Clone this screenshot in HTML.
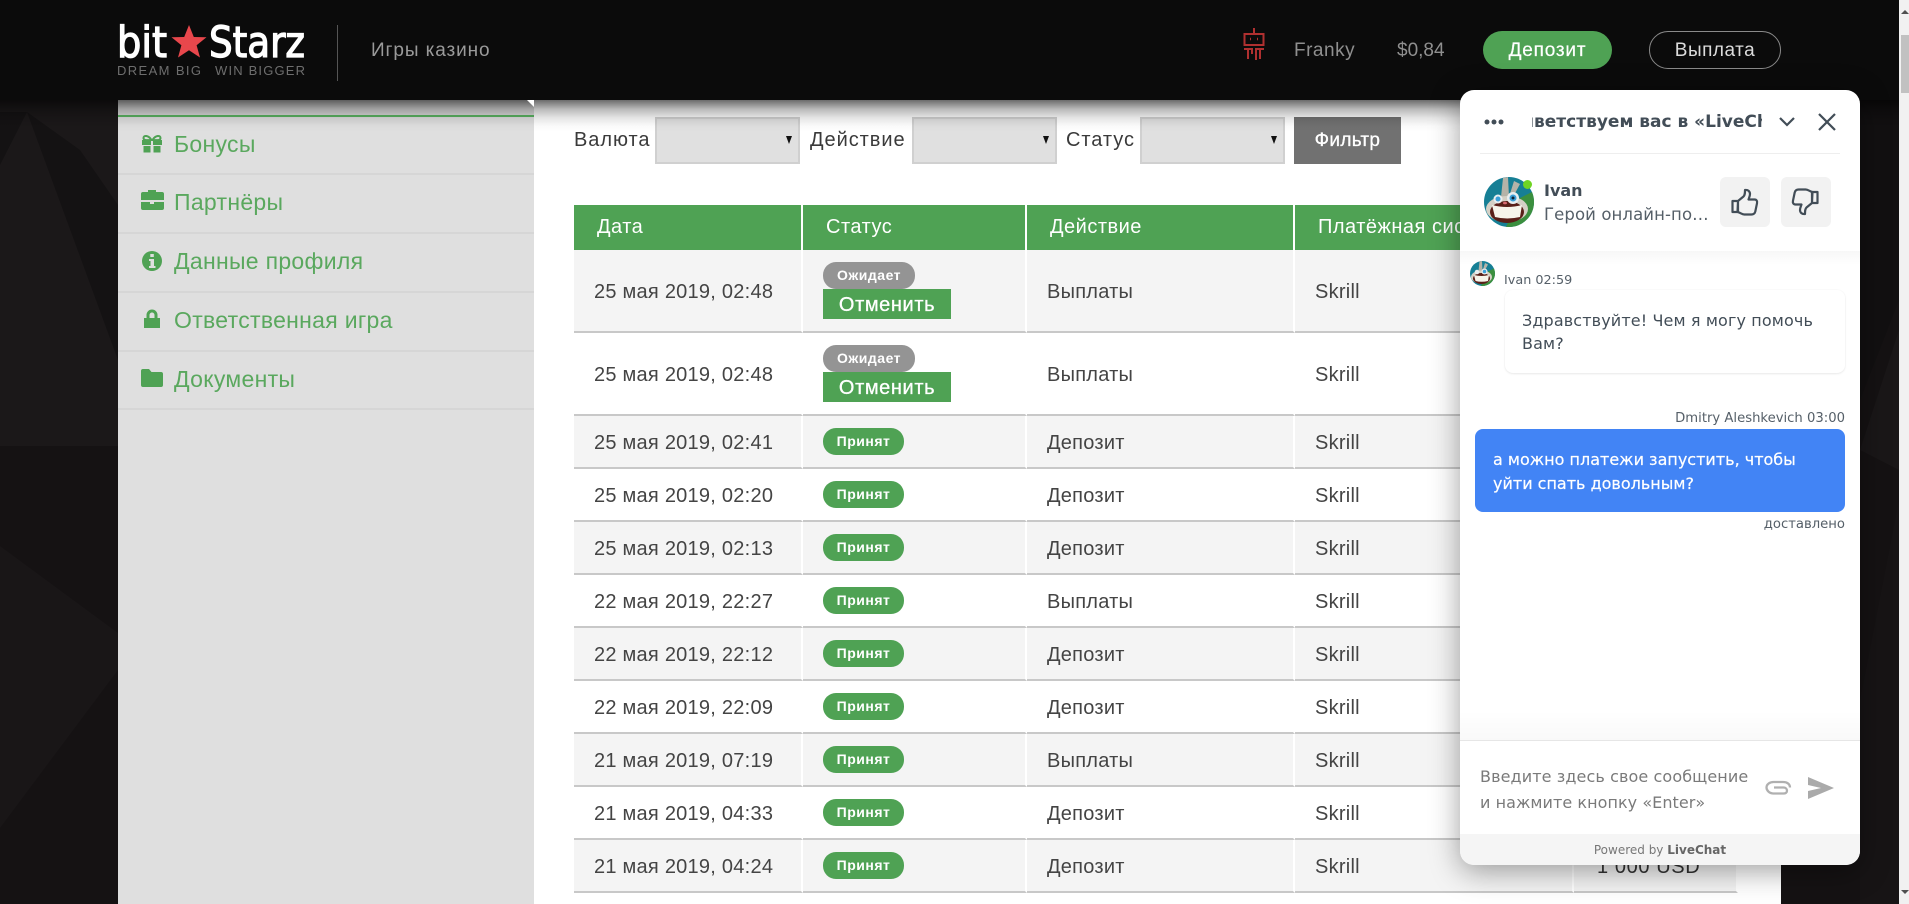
<!DOCTYPE html>
<html lang="ru"><head><meta charset="utf-8"><title>BitStarz</title>
<style>
html,body{margin:0;padding:0;width:1909px;height:904px;overflow:hidden;background:#151213}
*{box-sizing:border-box}
body{font-family:"Liberation Sans",sans-serif;position:relative}
.a{position:absolute;white-space:nowrap}
#hdr{position:absolute;left:0;top:0;width:1899px;height:100px;background:#0b0b0b;z-index:3}
#side{position:absolute;left:118px;top:100px;width:416px;height:804px;background:#dfdfdf}
#main{position:absolute;left:534px;top:100px;width:1247px;height:804px;background:#fff}
#sh{position:absolute;left:0;top:100px;width:1899px;height:32px;z-index:2;background:linear-gradient(rgba(0,0,0,.58),rgba(0,0,0,.28) 9px,rgba(0,0,0,.1) 18px,rgba(0,0,0,.02) 26px,rgba(0,0,0,0))}
.ln{position:absolute;left:118px;width:416px;height:2px;background:#d6d6d6}
.m{position:absolute;left:174px;font-size:23px;line-height:30px;color:#5aa85e;white-space:nowrap;letter-spacing:.3px}
.lb{position:absolute;top:126px;font-size:20px;line-height:28px;color:#3a3a3a;white-space:nowrap;letter-spacing:.95px}
.sel{position:absolute;top:117px;height:47px;background:#e0e0e0;border:2px solid #d0d0d0}
.sel:after{content:"";position:absolute;right:6px;top:17px;border-left:3.5px solid transparent;border-right:3.5px solid transparent;border-top:8px solid #111}
#tb{position:absolute;left:574px;top:205px;border-collapse:separate;border-spacing:0;table-layout:fixed;width:1164px}
#tb th{height:45px;background:#4fa254;color:#fff;font-weight:normal;font-size:20px;letter-spacing:.5px;text-align:left;padding:0 0 0 23px;border-right:2px solid #fff;white-space:nowrap;overflow:hidden}
#tb td{height:53px;font-size:20px;letter-spacing:.25px;color:#444;padding:3px 0 0 20px;border-bottom:2px solid #c8c8c8;border-right:2px solid #fff;white-space:nowrap;overflow:hidden}
#tb tr:nth-child(odd) td{background:#f4f4f4}
#tb tr.t td{height:83px}
#tb td.s{padding:0 0 0 20px}
.p{display:block;width:81px;height:27px;border-radius:13px;background:#4fa254;color:#fff;font-weight:bold;font-size:14px;line-height:27px;text-align:center;letter-spacing:.5px}
.p.w{width:92px;background:#949494}
.c{display:block;width:128px;height:30px;background:#4fa254;color:#fff;font-size:20px;font-weight:normal;line-height:33px;text-align:center;-webkit-text-stroke:.3px #fff;letter-spacing:.6px}
#chat{position:absolute;left:1460px;top:90px;width:400px;height:775px;background:#fff;border-radius:14px;box-shadow:0 6px 30px rgba(0,0,0,.38);z-index:5;overflow:hidden;font-family:"DejaVu Sans","Liberation Sans",sans-serif;color:#424d57}
#chat .a{line-height:24px}
</style></head><body>

<svg class="a" style="left:0;top:0" width="1909" height="904" viewBox="0 0 1909 904">
<rect width="1909" height="904" fill="#151213"/>
<polygon points="0,100 118,100 118,446 0,446" fill="#1b1819"/>
<polygon points="27,112 80,150 118,205 118,360" fill="#141213"/>
<polygon points="0,112 27,112 0,165" fill="#141213"/>
<polygon points="0,546 118,633 118,670 0,828" fill="#191617"/>
<polygon points="1860,450 1899,330 1899,470" fill="#1a1718"/>
<polygon points="1860,100 1899,100 1899,300 1860,400" fill="#121011"/>
<polygon points="1860,700 1899,500 1899,904 1860,904" fill="#171415"/>
</svg>

<div id="hdr">
<svg class="a" style="left:110px;top:18px" width="205" height="64" viewBox="110 18 205 64">
<text x="117" y="57" font-family="DejaVu Sans" font-size="43" fill="#fff" stroke="#fff" stroke-width="1.300" textLength="50" lengthAdjust="spacingAndGlyphs">bit</text>
<polygon fill="#e8474c" points="189,25 193.8,37 206.500,37.300 196.600,45.200 200,57.500 189,50.300 178,57.500 181.400,45.200 171.500,37.300 184.200,37"/>
<text x="209" y="57" font-family="DejaVu Sans" font-size="43" fill="#fff" stroke="#fff" stroke-width="1.300" textLength="96" lengthAdjust="spacingAndGlyphs">Starz</text>
<text x="117" y="75" font-family="Liberation Sans" font-size="13" fill="#6e6e6e" textLength="84" lengthAdjust="spacing">DREAM BIG</text>
<text x="215" y="75" font-family="Liberation Sans" font-size="13" fill="#6e6e6e" textLength="90" lengthAdjust="spacing">WIN BIGGER</text>
</svg>
<div class="a" style="left:337px;top:25px;width:1px;height:56px;background:#555"></div>
<div class="a" style="left:371px;top:37px;font-size:19px;line-height:28px;color:#9a9a9a;letter-spacing:.9px">Игры казино</div>
<svg class="a" style="left:1241px;top:26px" width="26" height="36" viewBox="0 0 26 36" fill="none" stroke="#b03030" stroke-width="2">
<path d="M13 2v5"/><rect x="3.5" y="8" width="19" height="11"/><path d="M9 13h1M16 13h1" stroke-width="2.5"/>
<path d="M3 23h8v5M23 23h-8v11M7 23v10"/><path d="M19 23v10"/>
</svg>
<div class="a" style="left:1294px;top:37px;font-size:19px;line-height:28px;color:#8f8f8f;letter-spacing:.5px">Franky</div>
<div class="a" style="left:1397px;top:37px;font-size:19px;line-height:28px;color:#8f8f8f">$0,84</div>
<div class="a" style="left:1483px;top:31px;width:129px;height:38px;border-radius:19px;background:#4fa254;color:#fff;font-size:19px;line-height:40px;text-align:center;letter-spacing:.8px;-webkit-text-stroke:.2px #fff">Депозит</div>
<div class="a" style="left:1649px;top:31px;width:132px;height:38px;border-radius:19px;border:1px solid #8a8a8a;color:#dcdcdc;font-size:19px;line-height:38px;text-align:center;letter-spacing:.5px">Выплата</div>
</div>
<div id="sh"></div>

<div id="side"></div>
<div class="a" style="left:527px;top:100px;width:0;height:0;border-left:7px solid transparent;border-top:7px solid #fff;z-index:3"></div>
<div class="a" style="left:118px;top:115px;width:416px;height:2px;background:#4f9d55;z-index:3"></div>
<div class="ln" style="top:173px"></div><div class="ln" style="top:232px"></div><div class="ln" style="top:291px"></div><div class="ln" style="top:350px"></div><div class="ln" style="top:408px"></div>

<svg class="a" style="left:140px;top:130px" width="26" height="262" viewBox="140 130 26 262" fill="#4fa254">
<path d="M142 140h20v5h-20zM143.500 146h7v6.500h-7zM153.500 146h7v6.500h-7z"/><path d="M151 140h2v12.500h-2z" fill="#dfdfdf"/>
<path d="M151.500 140c-3-5-8-5-8-2s4 2 8 2zM152.500 140c3-5 8-5 8-2s-4 2-8 2z" fill="none" stroke="#4fa254" stroke-width="2"/>
<path d="M148 193v-3h8v3M141 194a2 2 0 0 1 2-2h19a2 2 0 0 1 2 2v6h-23zM141 202h9v2h4v-2h10v6a2 2 0 0 1-2 2h-19a2 2 0 0 1-2-2z"/>
<path fill-rule="evenodd" d="M152 251a10 10 0 1 1 0 20 10 10 0 0 1 0-20zM150.300 254h3.500v3h-3.500zM149 259h5v7h1.500v2h-6.500v-2h1.500v-5h-1.500z"/>
<path fill-rule="evenodd" d="M146.500 318v-3a5.500 5.500 0 0 1 11 0v3h2.500v10h-16v-10zM149.500 318h5v-3a2.500 2.500 0 0 0-5 0z"/>
<path d="M141 371a2 2 0 0 1 2-2h6l2.500 3h9.500a2 2 0 0 1 2 2v11a2 2 0 0 1-2 2h-18a2 2 0 0 1-2-2z"/>
</svg>
<div class="m" style="top:129px">Бонусы</div>
<div class="m" style="top:187px">Партнёры</div>
<div class="m" style="top:246px">Данные профиля</div>
<div class="m" style="top:305px">Ответственная игра</div>
<div class="m" style="top:364px">Документы</div>

<div id="main"></div>
<div class="lb" style="left:574px;z-index:1">Валюта</div>
<div class="sel" style="left:655px;width:145px"></div>
<div class="lb" style="left:810px">Действие</div>
<div class="sel" style="left:912px;width:145px"></div>
<div class="lb" style="left:1066px">Статус</div>
<div class="sel" style="left:1140px;width:145px"></div>
<div class="a" style="left:1294px;top:117px;width:107px;height:47px;background:#717171;color:#fff;font-size:19px;line-height:47px;text-align:center;-webkit-text-stroke:.3px #fff;letter-spacing:.3px">Фильтр</div>

<table id="tb">
<colgroup><col style="width:229px"><col style="width:224px"><col style="width:268px"><col style="width:279px"><col style="width:164px"></colgroup>
<thead><tr><th>Дата</th><th>Статус</th><th>Действие</th><th>Платёжная система</th><th>Сумма</th></tr></thead>
<tbody>
<tr class="t"><td>25 мая 2019, 02:48</td><td class="s"><span class="p w">Ожидает</span><span class="c">Отменить</span></td><td>Выплаты</td><td>Skrill</td><td>100 USD</td></tr>
<tr class="t"><td>25 мая 2019, 02:48</td><td class="s"><span class="p w">Ожидает</span><span class="c">Отменить</span></td><td>Выплаты</td><td>Skrill</td><td>100 USD</td></tr>
<tr><td>25 мая 2019, 02:41</td><td class="s"><span class="p">Принят</span></td><td>Депозит</td><td>Skrill</td><td>100 USD</td></tr>
<tr><td>25 мая 2019, 02:20</td><td class="s"><span class="p">Принят</span></td><td>Депозит</td><td>Skrill</td><td>100 USD</td></tr>
<tr><td>25 мая 2019, 02:13</td><td class="s"><span class="p">Принят</span></td><td>Депозит</td><td>Skrill</td><td>100 USD</td></tr>
<tr><td>22 мая 2019, 22:27</td><td class="s"><span class="p">Принят</span></td><td>Выплаты</td><td>Skrill</td><td>100 USD</td></tr>
<tr><td>22 мая 2019, 22:12</td><td class="s"><span class="p">Принят</span></td><td>Депозит</td><td>Skrill</td><td>100 USD</td></tr>
<tr><td>22 мая 2019, 22:09</td><td class="s"><span class="p">Принят</span></td><td>Депозит</td><td>Skrill</td><td>100 USD</td></tr>
<tr><td>21 мая 2019, 07:19</td><td class="s"><span class="p">Принят</span></td><td>Выплаты</td><td>Skrill</td><td>100 USD</td></tr>
<tr><td>21 мая 2019, 04:33</td><td class="s"><span class="p">Принят</span></td><td>Депозит</td><td>Skrill</td><td>100 USD</td></tr>
<tr><td>21 мая 2019, 04:24</td><td class="s"><span class="p">Принят</span></td><td>Депозит</td><td>Skrill</td><td style="padding-left:23px;color:#333;letter-spacing:.6px">1 000 USD</td></tr>
</tbody></table>

<div id="chat">
<svg class="a" style="left:24px;top:29px" width="20" height="6"><circle cx="3" cy="3" r="2.500" fill="#424d57"/><circle cx="10" cy="3" r="2.500" fill="#424d57"/><circle cx="17" cy="3" r="2.500" fill="#424d57"/></svg>
<div class="a" style="left:72px;top:20px;width:230px;height:24px;overflow:hidden;font-size:17px;font-weight:bold"><span style="position:absolute;right:calc(100% - 2px);top:0">При</span><span style="position:absolute;left:2px;top:0">ветствуем вас в «LiveChat</span></div>
<svg class="a" style="left:318px;top:26px" width="18" height="12" fill="none" stroke="#424d57" stroke-width="2.200"><path d="M2 2l7 7 7-7"/></svg>
<svg class="a" style="left:357px;top:23px" width="20" height="18" fill="none" stroke="#424d57" stroke-width="2.200"><path d="M2 1l16 16M18 1L2 17"/></svg>
<div class="a" style="left:20px;top:63px;width:360px;height:1px;background:#eee"></div>

<svg class="a" style="left:24px;top:87px" width="50" height="50" viewBox="0 0 50 50">
<defs><clipPath id="cc"><circle cx="25" cy="25" r="25"/></clipPath></defs>
<g clip-path="url(#cc)"><rect width="50" height="50" fill="#167f95"/><path d="M34 22L50 14v36H22z" fill="#3b8f3e"/><path d="M17 20L19 1l5-1 1 20zM25 20L30 4l6 3-7 13z" fill="#b5b3a8"/><ellipse cx="23" cy="32" rx="21" ry="13" fill="#d4d0c5"/><ellipse cx="23" cy="35" rx="17" ry="11" fill="#5a1f18"/><path d="M8 28q15 4 30 0l-2 12q-13 3-25 0z" fill="#f6f4ea"/><circle cx="14" cy="22" r="4.500" fill="#e8eef0"/><circle cx="14" cy="22" r="2.500" fill="#3a9fd8"/><circle cx="29" cy="21" r="6" fill="#e8eef0"/><circle cx="29" cy="21" r="3.500" fill="#3a9fd8"/><circle cx="29" cy="21" r="1.500" fill="#123"/><ellipse cx="21" cy="26" rx="2" ry="1.300" fill="#d86a70"/></g>
</svg>
<svg class="a" style="left:62px;top:89px" width="12" height="12"><circle cx="5.500" cy="5.500" r="4.500" fill="#6fd424"/></svg>
<div class="a" style="left:84px;top:89px;font-size:16px;font-weight:bold">Ivan</div>
<div class="a" style="left:84px;top:113px;font-size:16.500px;color:#555f68;letter-spacing:.1px">Герой онлайн-по…</div>
<div class="a" style="left:260px;top:87px;width:50px;height:50px;background:#f2f2f2;border-radius:6px"></div>
<div class="a" style="left:321px;top:87px;width:50px;height:50px;background:#f2f2f2;border-radius:6px"></div>
<svg class="a" style="left:260px;top:87px" width="50" height="50" fill="none" stroke="#424d57" stroke-width="2.200" stroke-linejoin="round"><path d="M12.500 24h5.500v11h-5.500zM18 24l5.500-4.500c1.500-1.500 1.500-3.500 1.500-6.500 3-.5 5 1.500 5 4 0 2-1 4-1.500 5.500h6c2.200 0 3 1.800 2.500 3.800l-1.700 8.200c-.5 2-2 3-4 3h-7c-2.500 0-4-2-6.800-2.500z"/></svg>
<svg class="a" style="left:321px;top:87px" width="50" height="50" fill="none" stroke="#424d57" stroke-width="2.200" stroke-linejoin="round"><g transform="rotate(180 24.500 25)"><path d="M12.500 24h5.500v11h-5.500zM18 24l5.500-4.500c1.500-1.500 1.500-3.500 1.500-6.500 3-.5 5 1.500 5 4 0 2-1 4-1.500 5.500h6c2.200 0 3 1.800 2.500 3.800l-1.700 8.200c-.5 2-2 3-4 3h-7c-2.500 0-4-2-6.800-2.500z"/></g></svg>
<div class="a" style="left:0;top:161px;width:400px;height:14px;background:linear-gradient(rgba(0,0,0,.03),rgba(0,0,0,0))"></div>

<svg class="a" style="left:10px;top:171px" width="25" height="25" viewBox="0 0 50 50">
<g clip-path="url(#cc)"><rect width="50" height="50" fill="#167f95"/><path d="M34 22L50 14v36H22z" fill="#3b8f3e"/><path d="M17 20L19 1l5-1 1 20zM25 20L30 4l6 3-7 13z" fill="#b5b3a8"/><ellipse cx="23" cy="32" rx="21" ry="13" fill="#d4d0c5"/><ellipse cx="23" cy="35" rx="17" ry="11" fill="#5a1f18"/><path d="M8 28q15 4 30 0l-2 12q-13 3-25 0z" fill="#f6f4ea"/><circle cx="14" cy="22" r="4.500" fill="#e8eef0"/><circle cx="29" cy="21" r="6" fill="#e8eef0"/><circle cx="29" cy="21" r="3.500" fill="#3a9fd8"/></g>
</svg>
<div class="a" style="left:44px;top:179px;font-size:12.800px;color:#555f68">Ivan 02:59</div>
<div class="a" style="left:45px;top:200px;width:340px;height:83px;border-radius:8px;background:#fff;box-shadow:0 1px 2px rgba(0,0,0,.08),0 0 0 1px rgba(0,0,0,.012)"></div>
<div class="a" style="left:62px;top:219px;font-size:16px;letter-spacing:.12px">Здравствуйте! Чем я могу помочь</div>
<div class="a" style="left:62px;top:242px;font-size:16px;letter-spacing:.12px">Вам?</div>
<div class="a" style="right:15px;top:317px;font-size:13.200px;color:#555f68">Dmitry Aleshkevich 03:00</div>
<div class="a" style="left:15px;top:339px;width:370px;height:83px;border-radius:8px;background:#4284f5"></div>
<div class="a" style="left:33px;top:358px;font-size:16px;color:#fff;-webkit-text-stroke:.2px #fff">а можно платежи запустить, чтобы</div>
<div class="a" style="left:33px;top:382px;font-size:16px;color:#fff;-webkit-text-stroke:.2px #fff">уйти спать довольным?</div>
<div class="a" style="right:15px;top:423px;font-size:13.200px;color:#555f68">доставлено</div>

<div class="a" style="left:0;top:620px;width:400px;height:30px;background:linear-gradient(rgba(0,0,0,0),rgba(0,0,0,.025))"></div>
<div class="a" style="left:0;top:650px;width:400px;height:1px;background:#e6e6e6"></div>
<div class="a" style="left:20px;top:673px;font-size:16px;color:#7a7a7a;letter-spacing:.1px;line-height:27px">Введите здесь свое сообщение</div>
<div class="a" style="left:20px;top:699px;font-size:16px;color:#7a7a7a;letter-spacing:.05px;line-height:27px">и нажмите кнопку «Enter»</div>
<svg class="a" style="left:305px;top:690px" width="27" height="16" fill="none" stroke="#b0b0b0" stroke-width="2.300"><path d="M25 7.500C25 4 22 2 18 2H8.500C4.500 2 1.500 4.500 1.500 7.500S4.500 13.500 8.500 13.500h10c2 0 3.500-1 3.500-2.800S20.500 7.500 18.500 7.500H9"/></svg>
<svg class="a" style="left:348px;top:687px" width="26" height="22"><path d="M0 0l26 11L0 22l0-8 13-3L0 8z" fill="#aaa"/></svg>
<div class="a" style="left:0;top:744px;width:400px;height:31px;background:#f5f5f5;text-align:center;font-size:12px;line-height:32px!important;color:#777">Powered by <b style="color:#666">LiveChat</b></div>
</div>

<div class="a" style="left:1899px;top:0;width:10px;height:904px;background:#f1f1f1;z-index:6"></div>
<div class="a" style="left:1901px;top:35px;width:8px;height:58px;background:#c1c1c1;z-index:7"></div>
<div class="a" style="left:1901px;top:10px;width:0;height:0;border-left:4px solid transparent;border-right:4px solid transparent;border-bottom:4px solid #505050;z-index:7"></div>
<div class="a" style="left:1901px;top:890px;width:0;height:0;border-left:4px solid transparent;border-right:4px solid transparent;border-top:4px solid #505050;z-index:7"></div>
</body></html>
